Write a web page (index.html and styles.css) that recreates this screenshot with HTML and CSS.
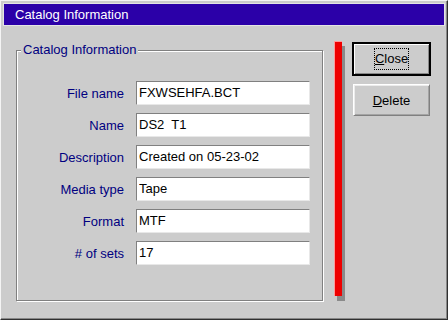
FILE: index.html
```html
<!DOCTYPE html>
<html lang="en">
<head>
  <meta charset="UTF-8" />
  <title>Catalog Information</title>
  <link rel="stylesheet" href="styles.css">
</head>
<body>
  <div class="window">
    <div class="titlebar">Catalog Information</div>
    <div class="content">
      <fieldset class="group">
        <legend>Catalog Information</legend>
        <div class="fields">
          <label for="fileName">File name</label>
          <input id="fileName" type="text" value="FXWSEHFA.BCT">
          <label for="catName">Name</label>
          <input id="catName" type="text" value="DS2  T1">
          <label for="description">Description</label>
          <input id="description" type="text" value="Created on 05-23-02">
          <label for="mediaType">Media type</label>
          <input id="mediaType" type="text" value="Tape">
          <label for="format">Format</label>
          <input id="format" type="text" value="MTF">
          <label for="numSets"># of sets</label>
          <input id="numSets" type="text" value="17">
        </div>
      </fieldset>
      <div class="divider"></div>
      <div class="buttons">
        <button class="btn btn-default"><span class="focus"><u>C</u>lose</span></button>
        <button class="btn"><u>D</u>elete</button>
      </div>
    </div>
  </div>
</body>
</html>
```

FILE: styles.css
```css
body {
  margin: 0;
  font-family: "Liberation Sans", Arial, sans-serif;
  font-size: 13px;
  background: #cccccc;
}

.window {
  width: 448px;
  height: 320px;
  box-sizing: border-box;
  background: #cccccc;
  border: 1px solid;
  border-color: #f4f4f4 #303030 #303030 #f4f4f4;
  box-shadow: inset -1px -1px 0 #888;
}

.titlebar {
  margin: 2px 2px 0;
  height: 21px;
  line-height: 21px;
  padding-left: 11px;
  border: 1px solid #e4e4e4;
  background: #2b00a8;
  color: #fff;
}

.content {
  display: flex;
  align-items: flex-start;
  padding-left: 15px;
}

.group {
  margin: 16px 0 0;
  padding: 0;
  min-width: 0;
  width: 307px;
  height: 259px;
  box-sizing: border-box;
  border: 1px solid #808080;
  box-shadow: 1px 1px 0 #fff, inset 1px 1px 0 #fff;
}

.group legend {
  margin-left: 4px;
  padding: 0 2px;
  line-height: 16px;
  color: #000080;
  background: #cccccc;
}

.fields {
  display: grid;
  grid-template-columns: 107px 174px;
  grid-auto-rows: 24px;
  column-gap: 12px;
  row-gap: 8px;
  padding-top: 23px;
}

.fields label {
  align-self: center;
  text-align: right;
  color: #000080;
}

.fields input {
  box-sizing: border-box;
  width: 174px;
  height: 24px;
  margin: 0;
  padding: 0 0 2px 2px;
  border: 1px solid;
  border-color: #808080 #e8e8e8 #e8e8e8 #808080;
  background: #fff;
  color: #000;
  font-family: "Liberation Sans", Arial, sans-serif;
  font-size: 13px;
  outline: none;
}

.divider {
  width: 7px;
  height: 254px;
  margin: 15px 0 0 11px;
  background: #ee0000;
  border-left: 1px solid #ff9a9a;
  border-top: 1px solid #ff9a9a;
  box-shadow: 3px 5px 0 #8a8a8a;
}

.buttons {
  display: flex;
  flex-direction: column;
  align-items: center;
  gap: 8px;
  margin: 16px 0 0 10px;
  width: 79px;
}

.btn {
  width: 77px;
  height: 32px;
  padding: 0;
  font-family: "Liberation Sans", Arial, sans-serif;
  font-size: 13px;
  color: #000;
  background: #cccccc;
  border: 1px solid;
  border-color: #fff #808080 #808080 #fff;
  box-shadow: inset 1px 1px 0 #ececec, inset -1px -1px 0 #a4a4a4;
}

.btn-default {
  width: 79px;
  height: 34px;
  border: 2px solid #000;
  box-shadow: inset 1px 1px 0 #fff, inset -1px -1px 0 #888;
}

.focus {
  display: inline-block;
  padding: 1px 0;
  line-height: 18px;
  border: 1px dotted #000;
}
```
